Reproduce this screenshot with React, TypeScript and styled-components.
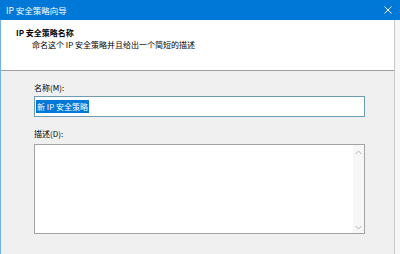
import React from "react";
import styled, { createGlobalStyle } from "styled-components";

const Global = createGlobalStyle`
  html, body { margin: 0; padding: 0; background: #f0f0f0; }
  body { font-family: "Noto Sans CJK SC", "Noto Sans", sans-serif; }
  * { box-sizing: border-box; }
`;

const Window = styled.div`
  width: 400px;
  height: 254px;
  display: flex;
  flex-direction: column;
  overflow: hidden;
  background: #f0f0f0;
`;

const TitleBar = styled.div`
  height: 20px;
  flex: none;
  background: #0078d7;
  display: flex;
  align-items: center;
  justify-content: space-between;
  padding: 0 8px 0 6px;
  color: #ffffff;
  font-size: 8.5px;
  line-height: 10px;
`;

const CloseButton = styled.span`
  display: flex;
  width: 8px;
  height: 8px;
`;

const Frame = styled.div`
  flex: 1;
  display: flex;
  border-left: 1px solid #72b0e4;
`;

const Panel = styled.div`
  width: 394px;
  flex: none;
  display: flex;
  flex-direction: column;
  border-right: 1px solid #c8c8c8;
`;

const Strip = styled.div`
  flex: 1;
  background: #f6f6f6;
`;

const Header = styled.div`
  height: 51px;
  flex: none;
  background: #ffffff;
  border-bottom: 1px solid #a0a0a0;
  padding: 8px 0 0 15px;
  color: #000;
  font-size: 8px;
  line-height: 10px;
`;

const HeaderTitle = styled.div`
  font-weight: bold;
`;

const HeaderSub = styled.div`
  margin-top: 2px;
  padding-left: 16px;
`;

const Body = styled.div`
  flex: 1;
  display: flex;
  flex-direction: column;
  padding: 12px 29px 0 33px;
  font-size: 8px;
  line-height: 10px;
  color: #000;
`;

const Label = styled.div<{ $gap: number }>`
  margin-top: ${(p) => p.$gap}px;
`;

const TextField = styled.div`
  margin-top: 3px;
  height: 21px;
  background: #ffffff;
  border: 1px solid #6c9db4;
  padding: 1px 1px;
  display: flex;
  align-items: center;
`;

const Selected = styled.span`
  background: #0078d7;
  color: #ffffff;
  padding: 2px 1px 1px 1px;
  line-height: 10px;
`;

const TextArea = styled.div`
  margin-top: 5px;
  height: 90px;
  background: #ffffff;
  border: 1px solid #a3a3a3;
  display: flex;
  justify-content: flex-end;
`;

const ScrollBar = styled.div`
  width: 11px;
  background: #f7f7f7;
  display: flex;
  flex-direction: column;
  justify-content: space-between;
  align-items: center;
  padding: 5px 0 3px;
`;

const Chevron = ({ up }: { up?: boolean }) => (
  <svg width="7" height="5" viewBox="0 0 7 5">
    <path
      d={up ? "M0.5 4 L3.5 1 L6.5 4" : "M0.5 1 L3.5 4 L6.5 1"}
      fill="none"
      stroke="#b4b4b4"
      strokeWidth="1"
    />
  </svg>
);

export default function App() {
  return (
    <>
      <Global />
      <Window>
        <TitleBar>
          <span>IP 安全策略向导</span>
          <CloseButton>
            <svg width="8" height="8" viewBox="0 0 8 8">
              <path d="M0.5 0.5 L7.5 7.5 M7.5 0.5 L0.5 7.5" stroke="#ffffff" strokeWidth="1" />
            </svg>
          </CloseButton>
        </TitleBar>
        <Frame>
          <Panel>
            <Header>
              <HeaderTitle>IP 安全策略名称</HeaderTitle>
              <HeaderSub>命名这个 IP 安全策略并且给出一个简短的描述</HeaderSub>
            </Header>
            <Body>
              <Label $gap={0}>名称(M):</Label>
              <TextField>
                <Selected>新 IP 安全策略</Selected>
              </TextField>
              <Label $gap={12}>描述(D):</Label>
              <TextArea>
                <ScrollBar>
                  <Chevron up />
                  <Chevron />
                </ScrollBar>
              </TextArea>
            </Body>
          </Panel>
          <Strip />
        </Frame>
      </Window>
    </>
  );
}
